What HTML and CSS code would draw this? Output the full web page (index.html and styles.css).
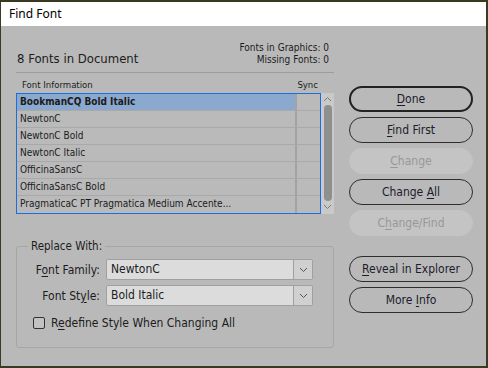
FILE: index.html
```html
<!DOCTYPE html>
<html>
<head>
<meta charset="utf-8">
<link rel="stylesheet" href="styles.css">
</head>
<body>
<div class="window">
  <div class="titlebar">Find Font</div>
  <div class="content">
    <div class="left">
      <div class="header">
        <div class="count">8 Fonts in Document</div>
        <div class="stats">
          <div>Fonts in Graphics: 0</div>
          <div>Missing Fonts: 0</div>
        </div>
      </div>
      <div class="colheads">
        <span>Font Information</span>
        <span class="synchead">Sync</span>
      </div>
      <div class="listwrap">
        <div class="list">
          <div class="row selected"><span class="name">BookmanCQ Bold Italic</span><span class="sync"></span></div>
          <div class="row"><span class="name">NewtonC</span><span class="sync"></span></div>
          <div class="row"><span class="name">NewtonC Bold</span><span class="sync"></span></div>
          <div class="row"><span class="name">NewtonC Italic</span><span class="sync"></span></div>
          <div class="row"><span class="name">OfficinaSansC</span><span class="sync"></span></div>
          <div class="row"><span class="name">OfficinaSansC Bold</span><span class="sync"></span></div>
          <div class="row last"><span class="name">PragmaticaC PT Pragmatica Medium Accente...</span><span class="sync"></span></div>
        </div>
        <div class="scrollbar">
          <svg class="arrow" width="9" height="6" viewBox="0 0 9 6"><path d="M1 5 L4.5 1.5 L8 5" fill="none" stroke="#7a7a7a" stroke-width="1"/></svg>
          <div class="thumb"></div>
          <svg class="arrow" width="9" height="6" viewBox="0 0 9 6"><path d="M1 1 L4.5 4.5 L8 1" fill="none" stroke="#7a7a7a" stroke-width="1"/></svg>
        </div>
      </div>
      <fieldset class="group">
        <legend>Replace With:</legend>
        <div class="field">
          <label>F<u>o</u>nt Family:</label>
          <div class="select"><span class="val">NewtonC</span><span class="drop"><svg width="9" height="6" viewBox="0 0 9 6"><path d="M1 1 L4.5 4.5 L8 1" fill="none" stroke="#555" stroke-width="1"/></svg></span></div>
        </div>
        <div class="field">
          <label>Font St<u>y</u>le:</label>
          <div class="select"><span class="val">Bold Italic</span><span class="drop"><svg width="9" height="6" viewBox="0 0 9 6"><path d="M1 1 L4.5 4.5 L8 1" fill="none" stroke="#555" stroke-width="1"/></svg></span></div>
        </div>
        <div class="check">
          <span class="box"></span>
          <span>R<u>e</u>define Style When Changing All</span>
        </div>
      </fieldset>
    </div>
    <div class="right">
      <div class="btns">
        <div class="btn default"><u>D</u>one</div>
        <div class="btn"><u>F</u>ind First</div>
        <div class="btn disabled"><u>C</u>hange</div>
        <div class="btn">Change <u>A</u>ll</div>
        <div class="btn disabled">C<u>h</u>ange/Find</div>
      </div>
      <div class="btns lower">
        <div class="btn"><u>R</u>eveal in Explorer</div>
        <div class="btn">More <u>I</u>nfo</div>
      </div>
    </div>
  </div>
</div>
</body>
</html>
```

FILE: styles.css
```css
* { box-sizing: border-box; }
html, body { margin: 0; padding: 0; }
body {
  width: 488px;
  height: 368px;
  background: #3a3a22;
  overflow: hidden;
  padding: 2px 2px 2px 1px;
  font-family: "DejaVu Sans Condensed", "DejaVu Sans", sans-serif;
  color: #1c1c1c;
}
u { text-decoration: underline; text-underline-offset: 2px; }
.window {
  width: 485px;
  height: 364px;
  background: #b9b9b9;
}
.titlebar {
  height: 24px;
  background: #ffffff;
  font-family: "Noto Sans", "Open Sans", sans-serif;
  font-size: 12px;
  line-height: 24px;
  padding-left: 8px;
  color: #000;
}
.content {
  display: flex;
  padding-left: 15px;
}
.left {
  width: 318px;
}
.header {
  display: flex;
  justify-content: space-between;
  align-items: flex-end;
  height: 47px;
  border-bottom: 1px solid #9d9d9d;
  padding-bottom: 6px;
}
.count {
  font-size: 13px;
  padding-left: 1px;
}
.stats {
  font-size: 10px;
  text-align: right;
  line-height: 12px;
  padding-right: 5px;
  padding-bottom: 0;
}
.colheads {
  display: flex;
  justify-content: space-between;
  font-size: 9.5px;
  height: 20px;
  line-height: 17px;
  padding-top: 3px;
  padding-left: 6px;
  padding-right: 16px;
}
.listwrap {
  display: flex;
  height: 121px;
}
.list {
  width: 305px;
  border: 1px solid #1a6fe0;
  background: #bababa;
}
.row {
  display: flex;
  height: 17px;
  border-bottom: 1px solid #a9a9a9;
  font-size: 10px;
  line-height: 16px;
}
.row.last { border-bottom: none; }
.row .name {
  flex: 1;
  padding-left: 3px;
  white-space: nowrap;
  overflow: hidden;
}
.row .sync {
  width: 25px;
  border-left: 2px solid #a3a3a3;
}
.row.selected .name {
  background: #8ba9cf;
  font-weight: bold;
}
.scrollbar {
  width: 13px;
  background: #c9c9c9;
  display: flex;
  flex-direction: column;
  align-items: center;
  justify-content: space-between;
  padding: 3px 0 4px;
}
.thumb {
  width: 8px;
  flex: 1;
  margin: 3px 0;
  background: #8f8f8f;
  border-radius: 4px;
}
.group {
  margin: 25px 0 0 0;
  padding: 0;
  border: 1px solid #a6a6a6;
  border-radius: 3px;
  height: 109px;
  display: flex;
  flex-direction: column;
}
.group legend {
  font-size: 11.5px;
  padding: 0 3px;
  margin-left: 11px;
}
.field {
  display: flex;
  align-items: center;
  height: 21px;
  margin-bottom: 5px;
}
.field:first-of-type { margin-top: 6px; }
.field label {
  width: 89px;
  text-align: right;
  font-size: 12px;
  padding-right: 6px;
}
.select {
  display: flex;
  width: 207px;
  height: 21px;
  border: 1px solid #a0a0a0;
  background: #dcdcdc;
  border-radius: 2px;
}
.select .val {
  flex: 1;
  font-size: 12px;
  line-height: 19px;
  padding-left: 4px;
}
.select .drop {
  width: 19px;
  border-left: 1px solid #a0a0a0;
  background: #d0d0d0;
  display: flex;
  align-items: center;
  justify-content: center;
}
.check {
  display: flex;
  align-items: center;
  font-size: 12px;
  padding-left: 16px;
  margin-top: 5px;
}
.check .box {
  width: 12px;
  height: 12px;
  border: 1px solid #333;
  border-radius: 2px;
  margin-right: 6px;
  background: #c2c2c2;
}
.right {
  margin-left: 15px;
  padding-top: 60px;
}
.btns {
  display: flex;
  flex-direction: column;
  gap: 5px;
}
.btns.lower { margin-top: 20px; }
.btn {
  width: 124px;
  height: 26px;
  border: 1px solid #2d2d2d;
  border-radius: 13px;
  font-size: 12px;
  line-height: 24px;
  text-align: center;
  color: #1c1c2c;
}
.btn.default {
  border: 2px solid #222;
  line-height: 22px;
}
.btn.disabled {
  border-color: #c4c4c4;
  background: #c4c4c4;
  color: #989898;
}
```
